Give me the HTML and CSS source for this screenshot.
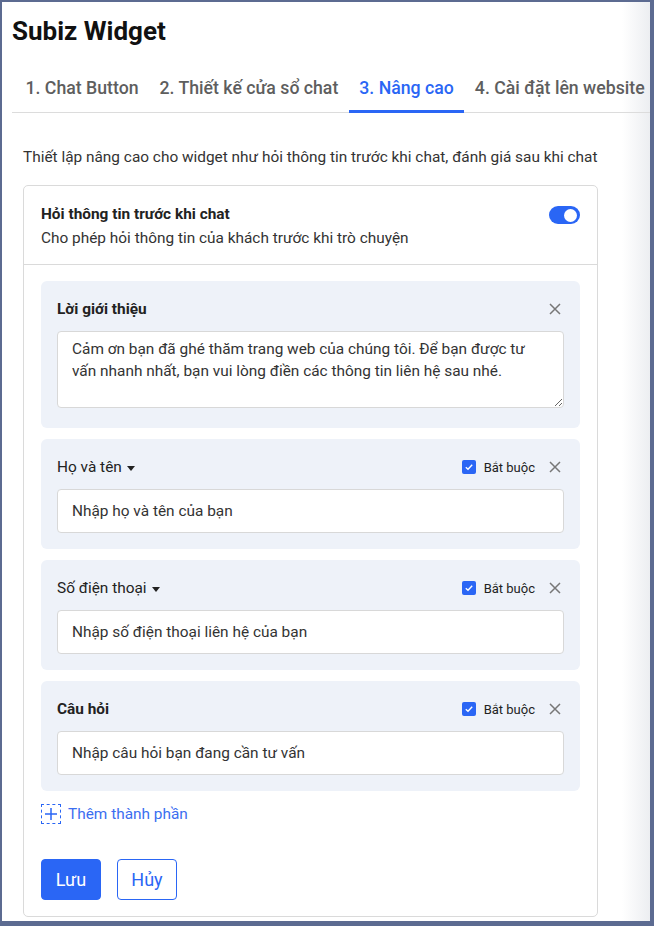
FILE: index.html
```html
<!DOCTYPE html>
<html lang="vi">
<head>
<meta charset="utf-8">
<title>Subiz Widget</title>
<link rel="stylesheet" href="styles.css">
</head>
<body>
<div class="page">
  <h1 class="title">Subiz Widget</h1>
  <nav class="tabs">
    <div class="tab">1. Chat Button</div>
    <div class="tab">2. Thiết kế cửa sổ chat</div>
    <div class="tab active">3. Nâng cao</div>
    <div class="tab">4. Cài đặt lên website</div>
  </nav>
  <div class="content">
    <p class="desc">Thiết lập nâng cao cho widget như hỏi thông tin trước khi chat, đánh giá sau khi chat</p>
    <div class="card">
      <div class="card-head">
        <div class="head-text">
          <div class="head-title">Hỏi thông tin trước khi chat</div>
          <div class="head-sub">Cho phép hỏi thông tin của khách trước khi trò chuyện</div>
        </div>
        <div class="toggle"><span class="knob"></span></div>
      </div>
      <div class="card-body">
        <div class="section">
          <div class="sec-row">
            <div class="sec-title bold">Lời giới thiệu</div>
            <div class="sec-actions">
              <svg class="close" width="12" height="12" viewBox="0 0 12 12"><path d="M1 1L11 11M11 1L1 11" stroke="#777" stroke-width="1.5" fill="none"/></svg>
            </div>
          </div>
          <textarea class="textarea">Cảm ơn bạn đã ghé thăm trang web của chúng tôi. Để bạn được tư vấn nhanh nhất, bạn vui lòng điền các thông tin liên hệ sau nhé.</textarea>
        </div>
        <div class="section">
          <div class="sec-row">
            <div class="sec-title">Họ và tên <span class="caret"></span></div>
            <div class="sec-actions">
              <span class="check"><svg width="14" height="14" viewBox="0 0 14 14"><path d="M3.8 7.2L6 9.2L10.2 4.8" stroke="#fff" stroke-width="1.4" fill="none"/></svg></span>
              <span class="req">Bắt buộc</span>
              <svg class="close" width="12" height="12" viewBox="0 0 12 12"><path d="M1 1L11 11M11 1L1 11" stroke="#777" stroke-width="1.5" fill="none"/></svg>
            </div>
          </div>
          <div class="input">Nhập họ và tên của bạn</div>
        </div>
        <div class="section">
          <div class="sec-row">
            <div class="sec-title">Số điện thoại <span class="caret"></span></div>
            <div class="sec-actions">
              <span class="check"><svg width="14" height="14" viewBox="0 0 14 14"><path d="M3.8 7.2L6 9.2L10.2 4.8" stroke="#fff" stroke-width="1.4" fill="none"/></svg></span>
              <span class="req">Bắt buộc</span>
              <svg class="close" width="12" height="12" viewBox="0 0 12 12"><path d="M1 1L11 11M11 1L1 11" stroke="#777" stroke-width="1.5" fill="none"/></svg>
            </div>
          </div>
          <div class="input">Nhập số điện thoại liên hệ của bạn</div>
        </div>
        <div class="section">
          <div class="sec-row">
            <div class="sec-title bold">Câu hỏi</div>
            <div class="sec-actions">
              <span class="check"><svg width="14" height="14" viewBox="0 0 14 14"><path d="M3.8 7.2L6 9.2L10.2 4.8" stroke="#fff" stroke-width="1.4" fill="none"/></svg></span>
              <span class="req">Bắt buộc</span>
              <svg class="close" width="12" height="12" viewBox="0 0 12 12"><path d="M1 1L11 11M11 1L1 11" stroke="#777" stroke-width="1.5" fill="none"/></svg>
            </div>
          </div>
          <div class="input">Nhập câu hỏi bạn đang cần tư vấn</div>
        </div>
        <div class="add">
          <span class="add-icon"><svg width="14" height="14" viewBox="0 0 14 14"><path d="M7 1V13M1 7H13" stroke="#2a66f5" stroke-width="1.5" fill="none"/></svg></span>
          <span class="add-text">Thêm thành phần</span>
        </div>
        <div class="buttons">
          <button class="btn primary">Lưu</button>
          <button class="btn outline">Hủy</button>
        </div>
      </div>
    </div>
  </div>
</div>
</body>
</html>
```
FILE: styles.css
```css
* { box-sizing: border-box; }
html {
  background: #5c6b91;
  height: 100%;
}
body {
  margin: 2px 4px 5px 2px;
  height: 919px;
  background: linear-gradient(to right, #ffffff 0, #ffffff 620px, #eceef1 648px);
  font-family: Roboto, "Noto Sans", sans-serif;
  color: #333;
  overflow: hidden;
}
.page {
  padding-top: 15px;
}
.title {
  margin: 0 0 0 10px;
  font-size: 26px;
  line-height: 28px;
  font-weight: 700;
  color: #111;
}
.tabs {
  display: flex;
  margin: 20px 0 0 10px;
  padding-left: 3px;
  border-bottom: 1px solid #dcdcdc;
  white-space: nowrap;
}
.tab {
  flex: none;
  padding: 13px 10.5px 11px;
  font-size: 17.7px;
  line-height: 21px;
  font-weight: 500;
  color: #5e5e5e;
  border-bottom: 3px solid transparent;
  margin-bottom: -1px;
}
.tab.active {
  color: #2a66f5;
  border-bottom-color: #2a66f5;
}
.content {
  padding: 0 0 0 21px;
}
.desc {
  margin: 34px 0 0 0;
  font-size: 15.4px;
  line-height: 20px;
  color: #333;
}
.card {
  margin-top: 18px;
  width: 575px;
  border: 1px solid #dadada;
  border-radius: 5px;
  background: #fff;
}
.card-head {
  display: flex;
  justify-content: space-between;
  align-items: flex-start;
  padding: 18px 17px 16px 17px;
  border-bottom: 1px solid #dadada;
}
.head-title {
  font-size: 15.4px;
  line-height: 20px;
  font-weight: 700;
  color: #222;
}
.head-sub {
  margin-top: 4px;
  font-size: 15.4px;
  line-height: 20px;
  color: #333;
}
.toggle {
  margin-top: 2px;
  width: 31px;
  height: 18px;
  border-radius: 9px;
  background: #2a66f5;
  position: relative;
}
.knob {
  position: absolute;
  right: 3px;
  top: 2.5px;
  width: 13px;
  height: 13px;
  border-radius: 50%;
  background: #fff;
}
.card-body {
  padding: 16px 17px 16px 17px;
  display: flex;
  flex-direction: column;
}
.section {
  background: #eef2f9;
  border-radius: 6px;
  padding: 18px 16px 16px 16px;
  margin-bottom: 11px;
}
.section:nth-child(4) {
  margin-bottom: 0;
}
.sec-row {
  display: flex;
  justify-content: space-between;
  align-items: center;
  height: 20px;
  margin-bottom: 12px;
}
.sec-title {
  font-size: 15.4px;
  line-height: 20px;
  color: #222;
  display: flex;
  align-items: center;
}
.sec-title.bold {
  font-weight: 700;
}
.caret {
  display: inline-block;
  margin-left: 5px;
  width: 0;
  height: 0;
  border-left: 4.5px solid transparent;
  border-right: 4.5px solid transparent;
  border-top: 5px solid #222;
  margin-top: 2px;
}
.sec-actions {
  display: flex;
  align-items: center;
}
.check {
  width: 14px;
  height: 14px;
  border-radius: 2px;
  background: #2a66f5;
  display: flex;
}
.req {
  margin-left: 8px;
  font-size: 13px;
  color: #222;
}
.close {
  margin-left: 14px;
  margin-right: 3px;
}
.textarea {
  display: block;
  width: 507px;
  height: 77px;
  margin: 0 0 4px 0;
  padding: 6px 14px;
  border: 1px solid #d8d8d8;
  border-radius: 4px;
  font-family: Roboto, "Noto Sans", sans-serif;
  font-size: 15.4px;
  line-height: 22px;
  color: #333;
  resize: vertical;
  background: #fff;
}
.input {
  height: 44px;
  padding: 0 14px;
  border: 1px solid #d8d8d8;
  border-radius: 4px;
  background: #fff;
  font-size: 15.4px;
  line-height: 42px;
  color: #333;
}
.add {
  display: flex;
  align-items: center;
  margin-top: 13px;
}
.add-icon {
  width: 20px;
  height: 20px;
  border: 1px dashed #2a66f5;
  display: flex;
  align-items: center;
  justify-content: center;
}
.add-text {
  margin-left: 7px;
  font-size: 15.4px;
  color: #3b6ef0;
}
.buttons {
  display: flex;
  gap: 16px;
  margin-top: 35px;
}
.btn {
  width: 60px;
  height: 41px;
  border-radius: 4px;
  font-family: Roboto, "Noto Sans", sans-serif;
  font-size: 18px;
  padding: 0;
  cursor: pointer;
}
.btn.primary {
  background: #2a66f5;
  border: 1px solid #2a66f5;
  color: #fff;
}
.btn.outline {
  background: #fff;
  border: 1px solid #2a66f5;
  color: #2a66f5;
}
```
